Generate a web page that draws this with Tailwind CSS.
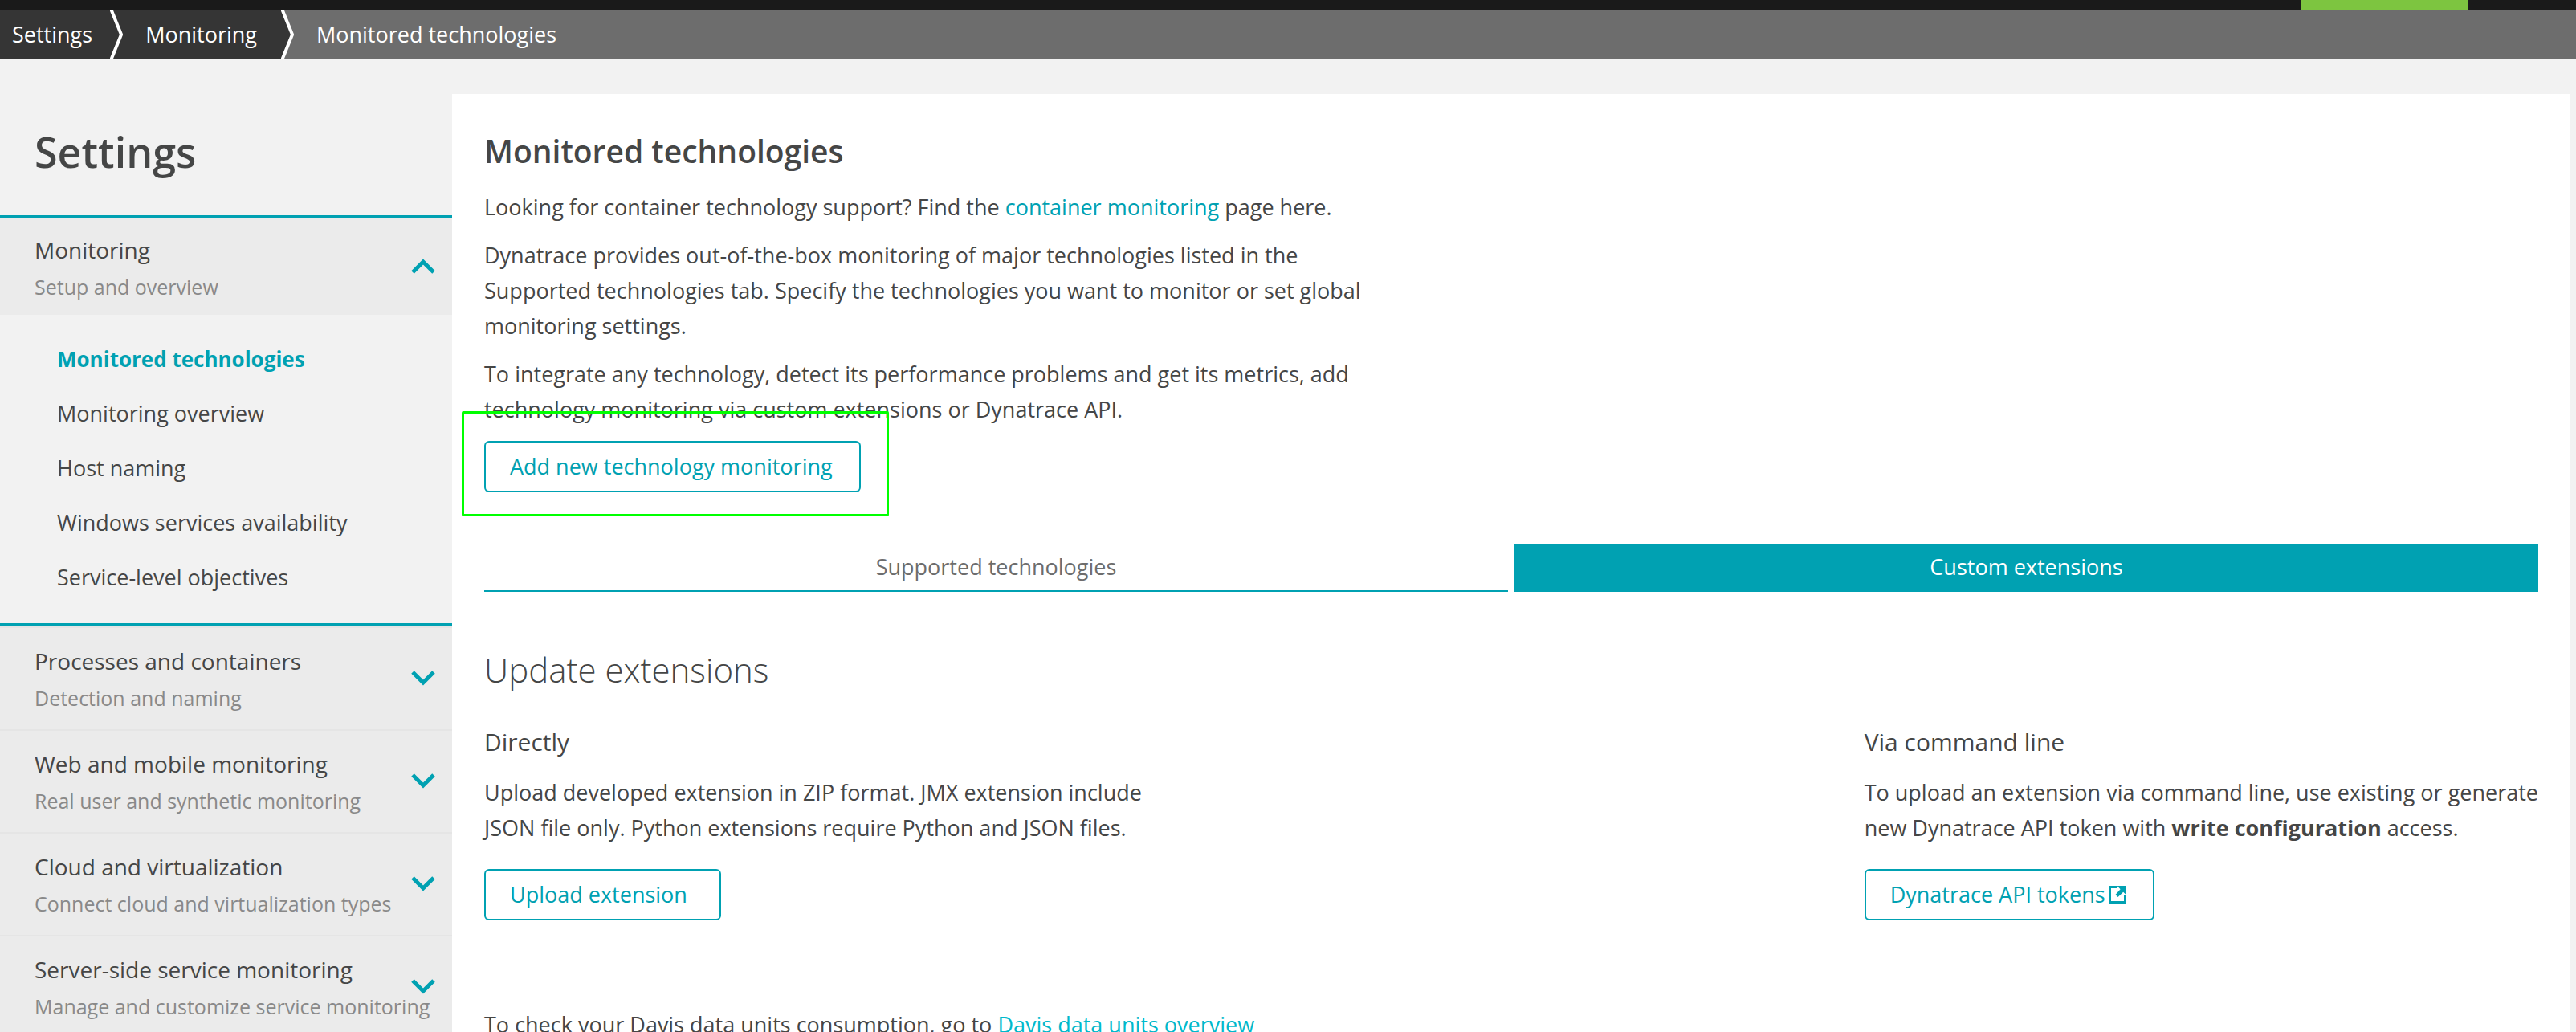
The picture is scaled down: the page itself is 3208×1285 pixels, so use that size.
<!DOCTYPE html>
<html lang="en">
<head>
<meta charset="utf-8">
<title>Monitored technologies - Settings</title>
<script src="https://cdn.jsdelivr.net/npm/@tailwindcss/browser@4"></script>
</head>
<body class="flex h-screen flex-col overflow-hidden bg-[#f2f2f2] font-['Open_Sans',sans-serif] text-[27px] leading-[44px] text-[#454646]">
  <header class="shrink-0">
    <div class="flex h-[13px] justify-end bg-[#1a1a1a] pr-[135px]">
      <div class="w-[207px] bg-[#7dc540]"></div>
    </div>
    <nav aria-label="Breadcrumb" class="bg-[#6d6d6d] font-medium text-white">
      <ol class="flex h-[60px] items-stretch leading-[60px]">
        <li class="flex bg-[#353535]">
          <a href="#" class="pr-[22px] pl-[15px]">Settings</a>
          <svg class="h-[60px] w-4" viewBox="0 0 16 60" fill="none" aria-hidden="true"><path d="M1.500 -1L14 30L1.500 61" stroke="#fff" stroke-width="4"/></svg>
        </li>
        <li class="flex">
          <a href="#" class="bg-[#353535] pr-[30px] pl-7">Monitoring</a>
          <svg class="h-[60px] w-4" viewBox="0 0 16 60" fill="none" aria-hidden="true"><path d="M0 0H2L14 30L2 60H0Z" fill="#353535"/><path d="M1.500 -1L14 30L1.500 61" stroke="#fff" stroke-width="4"/></svg>
        </li>
        <li class="pl-7" aria-current="page">Monitored technologies</li>
      </ol>
    </nav>
  </header>

  <div class="flex min-h-0 flex-1">
    <aside class="w-[563px] shrink-0">
      <h1 class="px-[43px] pt-20 pb-11 text-[52px] leading-[71px] font-semibold">Settings</h1>
      <nav aria-label="Settings">
        <section class="border-y-4 border-[#00a1b2]">
          <button type="button" aria-expanded="true" class="flex w-full items-center justify-between bg-[#ebebeb] pt-4 pr-[21px] pb-3 pl-[43px] text-left leading-[46px]">
            <span class="whitespace-nowrap"><span class="block text-[28px]">Monitoring</span><span class="block text-[25px] text-[#898989]">Setup and overview</span></span>
            <svg class="mb-1 h-5 w-[30px] shrink-0" viewBox="0 0 30 20" fill="none" stroke="#00a1b2" stroke-width="5" aria-hidden="true"><path d="M2 17L15 4L28 17"/></svg>
          </button>
          <ul class="pt-[21px] pb-[23px] pl-[71px] leading-[68px]">
            <li><a href="#" class="text-[26px] font-bold text-[#00a1b2]" aria-current="page">Monitored technologies</a></li>
            <li><a href="#">Monitoring overview</a></li>
            <li><a href="#">Host naming</a></li>
            <li><a href="#">Windows services availability</a></li>
            <li><a href="#">Service-level objectives</a></li>
          </ul>
        </section>
        <button type="button" class="flex w-full items-center border-t-2 border-[#e5e5e5] bg-[#ebebeb] pt-[18px] pr-[21px] pb-4 pl-[43px] text-left leading-[46px]">
          <span class="min-w-0 flex-1 whitespace-nowrap"><span class="block text-[28px]">Processes and containers</span><span class="block text-[25px] text-[#898989]">Detection and naming</span></span>
          <svg class="mb-1 h-5 w-[30px] shrink-0" viewBox="0 0 30 20" fill="none" stroke="#00a1b2" stroke-width="5" aria-hidden="true"><path d="M2 3L15 16L28 3"/></svg>
        </button>
        <button type="button" class="flex w-full items-center border-t-2 border-[#e5e5e5] bg-[#ebebeb] pt-[18px] pr-[21px] pb-4 pl-[43px] text-left leading-[46px]">
          <span class="min-w-0 flex-1 whitespace-nowrap"><span class="block text-[28px]">Web and mobile monitoring</span><span class="block text-[25px] text-[#898989]">Real user and synthetic monitoring</span></span>
          <svg class="mb-1 h-5 w-[30px] shrink-0" viewBox="0 0 30 20" fill="none" stroke="#00a1b2" stroke-width="5" aria-hidden="true"><path d="M2 3L15 16L28 3"/></svg>
        </button>
        <button type="button" class="flex w-full items-center border-t-2 border-[#e5e5e5] bg-[#ebebeb] pt-[18px] pr-[21px] pb-4 pl-[43px] text-left leading-[46px]">
          <span class="min-w-0 flex-1 whitespace-nowrap"><span class="block text-[28px]">Cloud and virtualization</span><span class="block text-[25px] text-[#898989]">Connect cloud and virtualization types</span></span>
          <svg class="mb-1 h-5 w-[30px] shrink-0" viewBox="0 0 30 20" fill="none" stroke="#00a1b2" stroke-width="5" aria-hidden="true"><path d="M2 3L15 16L28 3"/></svg>
        </button>
        <button type="button" class="flex w-full items-center border-t-2 border-[#e5e5e5] bg-[#ebebeb] pt-[18px] pr-[21px] pb-4 pl-[43px] text-left leading-[46px]">
          <span class="min-w-0 flex-1 whitespace-nowrap"><span class="block text-[28px]">Server-side service monitoring</span><span class="block text-[25px] text-[#898989]">Manage and customize service monitoring</span></span>
          <svg class="mb-1 h-5 w-[30px] shrink-0" viewBox="0 0 30 20" fill="none" stroke="#00a1b2" stroke-width="5" aria-hidden="true"><path d="M2 3L15 16L28 3"/></svg>
        </button>
      </nav>
    </aside>

    <main class="mt-11 mr-[7px] min-w-0 flex-1 bg-white px-10 pt-[47px]">
      <h2 class="text-[39px] leading-[48px] font-semibold">Monitored technologies</h2>
      <div class="mt-6 flex max-w-[1120px] flex-col gap-4">
        <p>Looking for container technology support? Find the <a href="#" class="text-[#00a1b2]">container monitoring</a> page here.</p>
        <p>Dynatrace provides out-of-the-box monitoring of major technologies listed in the Supported technologies tab. Specify the technologies you want to monitor or set global monitoring settings.</p>
        <p>To integrate any technology, detect its performance problems and get its metrics, add technology monitoring via custom extensions or Dynatrace API.</p>
      </div>
      <div class="relative mt-[17px] w-fit">
        <button type="button" class="block h-16 rounded-md border-2 border-[#00a1b2] pr-[33px] pl-[30px] text-[#00a1b2]">Add new technology monitoring</button>
        <div class="pointer-events-none absolute -top-[37px] -right-[35px] -bottom-[30px] -left-7 rounded-xs border-3 border-[#00ff00]"></div>
      </div>

      <div role="tablist" class="mt-16 grid grid-cols-2 gap-2">
        <button type="button" role="tab" aria-selected="false" class="h-[60px] border-b-2 border-[#00a1b2] text-[#6d6d6d]">Supported technologies</button>
        <button type="button" role="tab" aria-selected="true" class="h-[60px] border-b-2 border-[#00a1b2] bg-[#00a1b2] text-white">Custom extensions</button>
      </div>

      <h2 class="mt-17 text-[42px] leading-[58px] font-light">Update extensions</h2>
      <div class="mt-10 grid grid-cols-3 gap-5">
        <section>
          <h3 class="text-[30px] leading-[42px]">Directly</h3>
          <p class="mt-5">Upload developed extension in ZIP format. JMX extension include JSON file only. Python extensions require Python and JSON files.</p>
          <button type="button" class="mt-[29px] h-16 rounded-md border-2 border-[#00a1b2] pr-10 pl-[30px] text-[#00a1b2]">Upload extension</button>
        </section>
        <section class="col-start-3">
          <h3 class="text-[30px] leading-[42px]">Via command line</h3>
          <p class="mt-5 -mr-8">To upload an extension via command line, use existing or generate new Dynatrace API token with <strong class="font-bold">write configuration</strong> access.</p>
          <a href="#" class="mt-[29px] flex h-16 w-fit items-center gap-1 rounded-md border-2 border-[#00a1b2] pr-[33px] pl-[30px] text-[#00a1b2]">Dynatrace API tokens
            <svg class="size-[22px]" viewBox="0 0 22 22" fill="none" aria-hidden="true"><path d="M10 1.500H1.500V20.500H20.500V12" stroke="#00a1b2" stroke-width="3"/><path d="M10.500 0H22V11.500L18.200 7.700L11.500 14L8.500 11L14.600 4.200Z" fill="#00a1b2"/></svg>
          </a>
        </section>
      </div>
      <p class="mt-27">To check your Davis data units consumption, go to <a href="#" class="text-[#00b9cc]">Davis data units overview</a></p>
    </main>
  </div>
</body>
</html>
